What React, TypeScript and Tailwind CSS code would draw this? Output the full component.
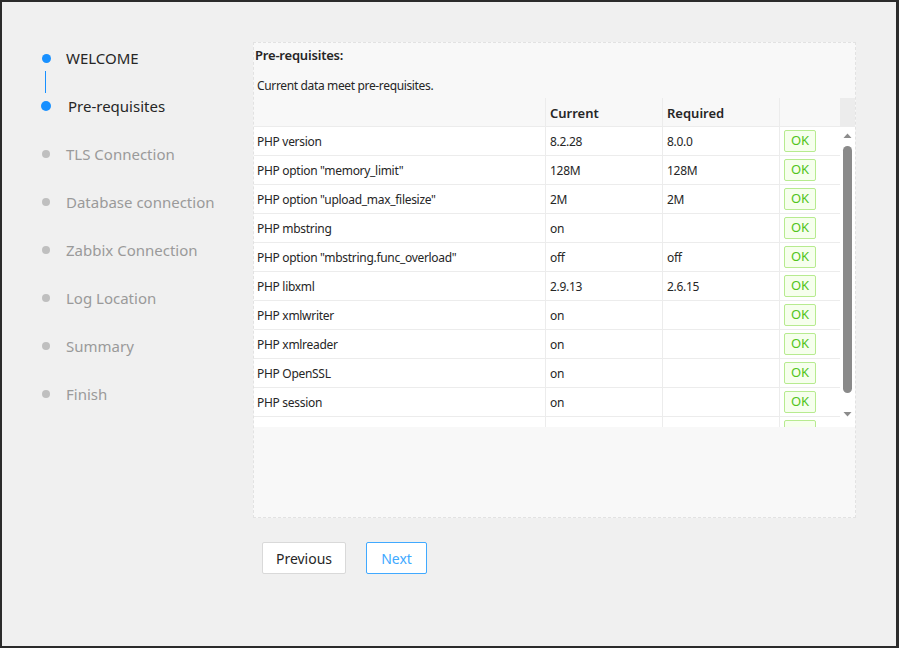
import React from "react";

const steps = [
  { label: "WELCOME", state: "done" },
  { label: "Pre-requisites", state: "active" },
  { label: "TLS Connection", state: "todo" },
  { label: "Database connection", state: "todo" },
  { label: "Zabbix Connection", state: "todo" },
  { label: "Log Location", state: "todo" },
  { label: "Summary", state: "todo" },
  { label: "Finish", state: "todo" },
];

const rows: [string, string, string][] = [
  ["PHP version", "8.2.28", "8.0.0"],
  ['PHP option "memory_limit"', "128M", "128M"],
  ['PHP option "upload_max_filesize"', "2M", "2M"],
  ["PHP mbstring", "on", ""],
  ['PHP option "mbstring.func_overload"', "off", "off"],
  ["PHP libxml", "2.9.13", "2.6.15"],
  ["PHP xmlwriter", "on", ""],
  ["PHP xmlreader", "on", ""],
  ["PHP OpenSSL", "on", ""],
  ["PHP session", "on", ""],
  ["", "", ""],
];

const font = { fontFamily: '"Noto Sans", "Open Sans", Arial, sans-serif' };

export default function App() {
  return (
    <div className="w-[899px] h-[648px] bg-[#2b2b2b] pt-[2px] pb-[2px] pl-[2px] pr-[3px]" style={font}>
      <div className="h-full w-full bg-[#f0f0f0] flex">
        {/* Sidebar */}
        <div className="w-[251px] pt-[32px] flex flex-col">
          {steps.map((s, i) => (
            <div key={s.label} className="relative h-[48px] flex items-center">
              <div className="w-[64px] flex items-center">
                <div
                  className={
                    s.state === "todo"
                      ? "ml-[40px] w-[8px] h-[8px] rounded-full bg-[#bfbfbf]"
                      : s.state === "active"
                      ? "ml-[39px] w-[10px] h-[10px] rounded-full bg-[#1890ff]"
                      : "ml-[40px] w-[9px] h-[9px] rounded-full bg-[#1890ff]"
                  }
                />
              </div>
              <span
                className={
                  "text-[15px] leading-[20px] " +
                  (s.state === "todo" ? "text-[#9a9a9a]" : "text-[#262626]") +
                  (s.state === "active" ? " ml-[2px]" : "")
                }
              >
                {s.label}
              </span>
              {i === 0 && (
                <div className="absolute left-[43px] top-[37px] w-[1px] h-[22px] bg-[#1890ff]" />
              )}
            </div>
          ))}
        </div>

        {/* Main */}
        <div className="flex flex-col pt-[40px]">
          <div className="w-[603px] h-[476px] bg-[#f8f8f8] border border-dashed border-[#e2e2e2] flex flex-col">
            <div className="h-[25px] flex items-center pl-[1px] text-[13px] font-semibold tracking-[-0.2px] text-[#262626]">
              Pre-requisites:
            </div>
            <div className="h-[30px] pt-[10px] pl-[3px] text-[12px] leading-[16px] tracking-[-0.35px] text-[#262626]">
              Current data meet pre-requisites.
            </div>
            {/* Header */}
            <div className="flex h-[29px] border-b border-[#ececec] text-[13px] font-semibold text-[#262626]">
              <div className="w-[292px] border-r border-[#ececec] bg-[#f8f8f8]" />
              <div className="w-[117px] border-r border-[#ececec] bg-[#f8f8f8] flex items-center pl-[4px] pt-[3px]">Current</div>
              <div className="w-[117px] border-r border-[#ececec] bg-[#f8f8f8] flex items-center pl-[4px] pt-[3px]">Required</div>
              <div className="w-[60px] bg-[#f8f8f8]" />
              <div className="w-[15px] bg-[#ececec]" />
            </div>
            {/* Body */}
            <div className="flex h-[300px] overflow-hidden">
              <div className="w-[586px] h-[300px] overflow-hidden flex flex-col">
                {rows.map((r, idx) => (
                  <div key={idx} className="flex shrink-0 h-[29px] border-b border-[#ececec] bg-white text-[12px] tracking-[-0.3px] text-[#262626]">
                    <div className="w-[292px] border-r border-[#ececec] flex items-center pl-[3px] pt-[2px]">{r[0]}</div>
                    <div className="w-[117px] border-r border-[#ececec] flex items-center pl-[4px] pt-[2px]">{r[1]}</div>
                    <div className="w-[117px] border-r border-[#ececec] flex items-center pl-[4px] pt-[2px]">{r[2]}</div>
                    <div className="w-[60px] flex items-center pl-[4px]">
                      <span className="w-[32px] h-[22px] flex items-center justify-center border border-[#b7eb8f] bg-[#f6ffed] text-[#52c41a] text-[13px] tracking-normal rounded-[2px]">
                        {idx < 10 ? "OK" : ""}
                      </span>
                    </div>
                  </div>
                ))}
              </div>
              {/* Scrollbar */}
              <div className="w-[15px] h-[300px] bg-white flex flex-col items-center">
                <svg width="15" height="14" viewBox="0 0 15 14" className="shrink-0">
                  <path d="M3.5 11 L7.5 6.5 L11.5 11 Z" fill="#8c8c8c" />
                </svg>
                <div className="w-[9px] h-[247px] mt-[5px] rounded-[5px] bg-[#8a8a8a] ml-[-1px]" />
                <div className="flex-1" />
                <svg width="15" height="14" viewBox="0 0 15 14" className="shrink-0 mb-[6px]">
                  <path d="M3.5 5 L7.5 9.5 L11.5 5 Z" fill="#8c8c8c" />
                </svg>
              </div>
            </div>
          </div>
          {/* Buttons */}
          <div className="flex gap-[20px] pl-[9px] pt-[24px]">
            <button className="w-[84px] h-[32px] bg-white border border-[#d9d9d9] rounded-[2px] text-[14px] text-[#262626]">
              Previous
            </button>
            <button className="w-[61px] h-[32px] bg-white border border-[#40a9ff] rounded-[2px] text-[14px] text-[#40a9ff]">
              Next
            </button>
          </div>
        </div>
      </div>
    </div>
  );
}
